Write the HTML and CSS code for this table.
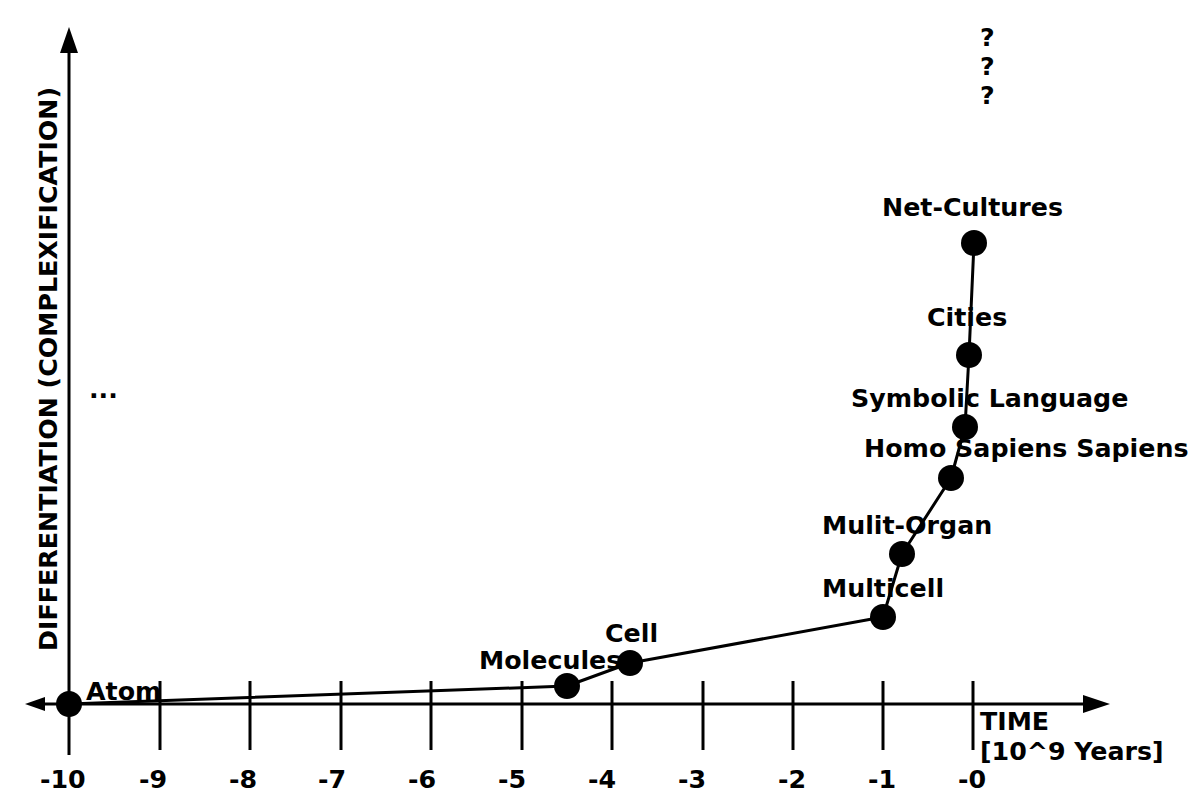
FILE: index.html
```html
<!DOCTYPE html>
<html lang="en">
<head>
<meta charset="utf-8">
<title>Differentiation over Time</title>
<link rel="stylesheet" href="styles.css">
</head>
<body>
<svg class="chart" width="1200" height="804" viewBox="0 0 1200 804" xmlns="http://www.w3.org/2000/svg">
  <!-- axes -->
  <line class="axis" x1="69" y1="50" x2="69" y2="755"/>
  <line class="axis" x1="42" y1="704" x2="1086" y2="704"/>
  <polygon class="head" points="69,27 60,53 78,53"/>
  <polygon class="head" points="1110,704 1083,695 1083,713"/>
  <polygon class="head" points="25,704 45,697 45,711"/>

  <!-- ticks -->
  <g class="ticks">
    <line x1="160" y1="681" x2="160" y2="750"/>
    <line x1="250" y1="681" x2="250" y2="750"/>
    <line x1="341" y1="681" x2="341" y2="750"/>
    <line x1="431" y1="681" x2="431" y2="750"/>
    <line x1="522" y1="681" x2="522" y2="750"/>
    <line x1="612" y1="681" x2="612" y2="750"/>
    <line x1="703" y1="681" x2="703" y2="750"/>
    <line x1="793" y1="681" x2="793" y2="750"/>
    <line x1="883" y1="681" x2="883" y2="750"/>
    <line x1="973" y1="681" x2="973" y2="750"/>
  </g>

  <!-- tick labels -->
  <g class="label">
    <text x="40" y="788">-10</text>
    <text x="139" y="788">-9</text>
    <text x="229" y="788">-8</text>
    <text x="318" y="788">-7</text>
    <text x="408" y="788">-6</text>
    <text x="498" y="788">-5</text>
    <text x="588" y="788">-4</text>
    <text x="678" y="788">-3</text>
    <text x="778" y="788">-2</text>
    <text x="868" y="788">-1</text>
    <text x="958" y="788">-0</text>
  </g>

  <!-- axis titles -->
  <text class="label" x="980" y="730">TIME</text>
  <text class="label" x="980" y="760">[10^9 Years]</text>
  <text class="label" transform="translate(57 651) rotate(-90)">DIFFERENTIATION (COMPLEXIFICATION)</text>
  <text class="label" x="89" y="398">...</text>
  <text class="label" x="980" y="46">?</text>
  <text class="label" x="980" y="75">?</text>
  <text class="label" x="980" y="104">?</text>

  <!-- node labels -->
  <g class="label">
    <text x="86" y="700">Atom</text>
    <text x="479" y="669">Molecules</text>
    <text x="605" y="642">Cell</text>
    <text x="822" y="597">Multicell</text>
    <text x="822" y="534">Mulit-Organ</text>
    <text x="864" y="457">Homo Sapiens Sapiens</text>
    <text x="851" y="407">Symbolic Language</text>
    <text x="927" y="326">Cities</text>
    <text x="882" y="216">Net-Cultures</text>
  </g>

  <!-- curve -->
  <polyline class="curve" points="69,704 567,686 630,663 883,617 902,554 951,478 965,427 969,355 974,243"/>

  <!-- nodes -->
  <g class="dots">
    <circle cx="69" cy="704" r="13"/>
    <circle cx="567" cy="686" r="13"/>
    <circle cx="630" cy="663" r="13"/>
    <circle cx="883" cy="617" r="13"/>
    <circle cx="902" cy="554" r="13"/>
    <circle cx="951" cy="478" r="13"/>
    <circle cx="965" cy="427" r="13"/>
    <circle cx="969" cy="355" r="13"/>
    <circle cx="974" cy="243" r="13"/>
  </g>
</svg>
</body>
</html>
```

FILE: styles.css
```css
html, body {
  margin: 0;
  padding: 0;
  background: #ffffff;
}

.chart {
  display: block;
  width: 1200px;
  height: 804px;
}

.axis,
.ticks line {
  stroke: #000000;
  stroke-width: 3;
  fill: none;
}

.head {
  fill: #000000;
  stroke: none;
}

.curve {
  fill: none;
  stroke: #000000;
  stroke-width: 3;
  stroke-linejoin: round;
}

.dots circle {
  fill: #000000;
}

.label,
.label text {
  font-family: "DejaVu Sans", "Liberation Sans", sans-serif;
  font-weight: bold;
  font-size: 25.3px;
  fill: #000000;
}
```
